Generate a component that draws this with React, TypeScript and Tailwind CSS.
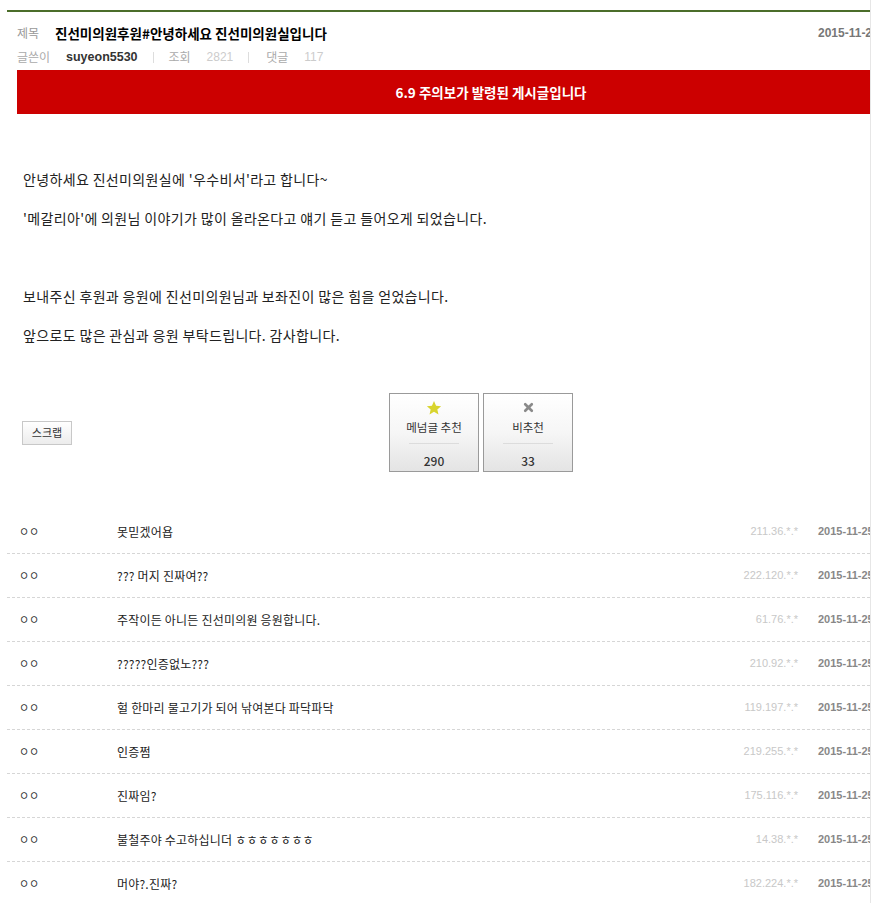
import React from "react";

const comments = [
  { text: "못믿겠어욥", ip: "211.36.*.*" },
  { text: "??? 머지 진짜여??", ip: "222.120.*.*" },
  { text: "주작이든 아니든 진선미의원 응원합니다.", ip: "61.76.*.*" },
  { text: "?????인증없노???", ip: "210.92.*.*" },
  { text: "헐 한마리 물고기가 되어 낚여본다 파닥파닥", ip: "119.197.*.*" },
  { text: "인증쩜", ip: "219.255.*.*" },
  { text: "진짜임?", ip: "175.116.*.*" },
  { text: "불철주야 수고하십니더 ㅎㅎㅎㅎㅎㅎㅎ", ip: "14.38.*.*" },
  { text: "머야?.진짜?", ip: "182.224.*.*" },
];

const kr = "font-['Noto_Sans_CJK_KR','Liberation_Sans',sans-serif]";
const num = "font-['Liberation_Sans','Noto_Sans_CJK_KR',sans-serif]";

function Star() {
  return (
    <svg width="16" height="16" viewBox="0 0 24 24">
      <path
        d="M12 1.5l3.1 7 7.6.7-5.7 5 1.7 7.5L12 17.8l-6.7 3.9 1.7-7.5-5.7-5 7.6-.7z"
        fill="#d8d42e"
      />
    </svg>
  );
}

function Cross() {
  return (
    <svg width="11" height="11" viewBox="0 0 10 10">
      <path d="M2 2l6 6M8 2l-6 6" stroke="#8a8a8a" strokeWidth="2.4" strokeLinecap="round" />
    </svg>
  );
}

function VoteBox({ icon, label, count }: { icon: React.ReactNode; label: string; count: string }) {
  return (
    <div className="w-[90px] h-[79px] border border-[#9a9a9a] bg-gradient-to-b from-white via-[#f6f6f6] to-[#e4e4e4] flex flex-col items-center">
      <div className="h-[15px] mt-[6px] flex items-center">{icon}</div>
      <div className="text-[11.5px] text-[#333] leading-[14px] mt-[5px]">{label}</div>
      <div className="w-[50px] border-t border-[#dcdcdc] mt-[9px]" />
      <div className="text-[12px] font-medium text-[#333] leading-[14px] mt-[10px]">{count}</div>
    </div>
  );
}

export default function App() {
  return (
    <div className={`w-[872px] h-[903px] overflow-hidden bg-white ${kr}`}>
      <div className="w-[871px] h-full overflow-hidden border-r border-[#e6e6e6]">
        <div className="w-[968px] ml-[7px] mt-[10px] border-t-2 border-[#4b6d2a]">
          <div className="px-[10px]">
            <div className="flex items-center h-[20px] mt-[11px]">
              <div className="flex-1 flex items-center">
                <span className="text-[12px] text-[#999] w-[38px]">제목</span>
                <span className="text-[13.5px] font-bold text-black">
                  진선미의원후원#안녕하세요 진선미의원실입니다
                </span>
              </div>
              <div className={`w-[147px] text-[12px] font-bold text-[#777] ${num}`}>2015-11-25</div>
            </div>
            <div className="flex items-center h-[22px] mt-[3px] text-[12px]">
              <span className="text-[#aaa] w-[49px]">글쓴이</span>
              <span className={`font-bold text-[#333] ${num} text-[12.5px]`}>suyeon5530</span>
              <span className="mx-[15px] h-[11px] border-l border-[#ddd]" />
              <span className="text-[#aaa] w-[38px]">조회</span>
              <span className={`text-[#ccc] ${num}`}>2821</span>
              <span className="ml-[15px] mr-[17px] h-[11px] border-l border-[#ddd]" />
              <span className="text-[#aaa] w-[38px]">댓글</span>
              <span className={`text-[#ccc] ${num}`}>117</span>
            </div>
            <div className="mt-[2px] h-[44px] bg-[#cc0000] flex items-center justify-center">
              <span className="text-white font-bold text-[13.5px]">6.9 주의보가 발령된 게시글입니다</span>
            </div>
          </div>

          <div className="mt-[46px] pl-[16px] text-[14px] tracking-[0.35px] text-[#222] leading-[39px]">
            <p>안녕하세요 진선미의원실에 '우수비서'라고 합니다~</p>
            <p>'메갈리아'에 의원님 이야기가 많이 올라온다고 얘기 듣고 들어오게 되었습니다.</p>
            <p>&nbsp;</p>
            <p>보내주신 후원과 응원에 진선미의원님과 보좌진이 많은 힘을 얻었습니다.</p>
            <p>앞으로도 많은 관심과 응원 부탁드립니다. 감사합니다.</p>
          </div>

          <div className="mt-[38px] h-[79px] flex items-center">
            <button className="ml-[15px] w-[50px] h-[24px] border border-[#c8c8c8] bg-gradient-to-b from-white to-[#ececec] text-[11px] text-[#333] flex items-center justify-center">
              스크랩
            </button>
            <div className="ml-[317px] flex gap-[4px]">
              <VoteBox icon={<Star />} label="메넘글 추천" count="290" />
              <VoteBox icon={<Cross />} label="비추천" count="33" />
            </div>
          </div>

          <div className="mt-[38px]">
            {comments.map((c, i) => (
              <div key={i} className="h-[44px] flex items-center border-b border-dashed border-[#d6d6d6]">
                <div className="w-[110px] pl-[12px] text-[11px] text-[#333]">ㅇㅇ</div>
                <div className="flex-1 text-[12px] tracking-[0.2px] text-[#222]">{c.text}</div>
                <div className={`w-[120px] pr-[20px] text-right text-[11px] text-[#c8c8c8] ${num}`}>{c.ip}</div>
                <div className={`w-[157px] text-[11px] font-bold text-[#888] ${num}`}>2015-11-25</div>
              </div>
            ))}
          </div>
        </div>
      </div>
    </div>
  );
}
